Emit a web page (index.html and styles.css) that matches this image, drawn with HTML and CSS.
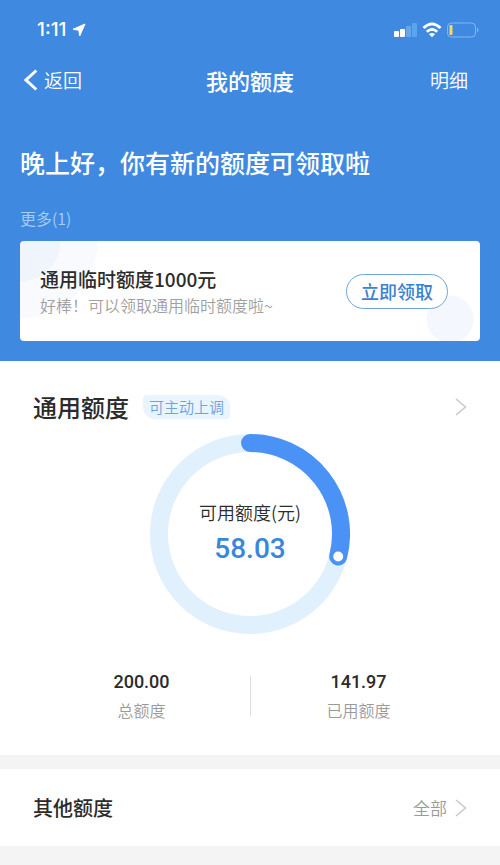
FILE: index.html
```html
<!DOCTYPE html>
<html lang="zh-CN">
<head>
<meta charset="utf-8">
<meta name="viewport" content="width=device-width, initial-scale=1">
<title>我的额度</title>
<link rel="stylesheet" href="styles.css">
</head>
<body>
<header class="hero">
  <div class="status">
    <div class="status-time">
      <span>1:11</span>
      <svg width="14" height="14" viewBox="0 0 14 14" aria-hidden="true"><path d="M13 1 L1 6.300 L6.800 7.200 L7.700 13 Z" fill="#fff" stroke="#fff" stroke-linejoin="round"/></svg>
    </div>
    <svg class="status-icons" width="86" height="16" viewBox="0 0 86 16" aria-hidden="true">
      <rect x="0" y="9" width="5" height="6" rx="1" fill="#fff"/>
      <rect x="6" y="7" width="5" height="8" rx="1" fill="#fff"/>
      <rect x="12" y="4" width="5" height="11" rx="1" fill="#66a7eb"/>
      <rect x="18" y="1" width="5" height="14" rx="1" fill="#5aa6ee"/>
      <g fill="none" stroke="#fff" stroke-width="2.7">
        <path d="M29.5 6 Q38 -2.2 46.5 6"/>
        <path d="M32.8 9.8 Q38 4.900 43.2 9.8"/>
      </g>
      <path d="M35 12.300 Q38 9.700 41 12.300 L38 15.200 Z" fill="#fff"/>
      <rect x="53.5" y="1" width="28" height="14" rx="4" fill="none" stroke="#83b8ee"/>
      <rect x="55.500" y="3" width="3" height="10" rx="1" fill="#fbd667"/>
      <path d="M83 5.500 Q86 8 83 10.500 Z" fill="#83b8ee"/>
    </svg>
  </div>
  <nav class="nav">
    <a class="back" href="#"><svg width="14" height="22" viewBox="0 0 14 22" aria-hidden="true"><path d="M12.300 1.500 L2 11 L12.300 20.500" fill="none" stroke="#fff" stroke-width="3"/></svg>返回</a>
    <h1>我的额度</h1>
    <a class="detail" href="#">明细</a>
  </nav>
  <h2 class="greeting">晚上好，你有新的额度可领取啦</h2>
  <a class="more" href="#">更多(1)</a>
  <section class="offer">
    <div>
      <h3>通用临时额度1000元</h3>
      <p>好棒！可以领取通用临时额度啦~</p>
    </div>
    <button type="button">立即领取</button>
  </section>
</header>
<main>
  <section class="quota">
    <div class="quota-head">
      <h2>通用额度</h2>
      <span class="tag">可主动上调</span>
      <a class="chevron" href="#" aria-label="通用额度"><svg width="12" height="18" viewBox="0 0 12 18" aria-hidden="true"><path d="M1 1 L10.500 9 L1 17" fill="none" stroke="#c8c8c8" stroke-width="1.500"/></svg></a>
    </div>
    <div class="ring">
      <svg viewBox="-100 -100 200 200" aria-hidden="true">
        <circle r="91" fill="none" stroke="#e1f0fd" stroke-width="18"/>
        <path d="M0 -91 A91 91 0 0 1 88.200 22.500" fill="none" stroke="#4a92f6" stroke-width="18" stroke-linecap="round"/>
        <circle cx="88.200" cy="22.500" r="5" fill="#fff"/>
      </svg>
      <div class="ring-text">
        <span>可用额度(元)</span>
        <strong>58.03</strong>
      </div>
    </div>
    <dl class="stats">
      <div><dt>总额度</dt><dd>200.00</dd></div>
      <div><dt>已用额度</dt><dd>141.97</dd></div>
    </dl>
  </section>
  <section class="other">
    <h2>其他额度</h2>
    <a href="#">全部<svg width="12" height="18" viewBox="0 0 12 18" aria-hidden="true"><path d="M1 1 L10.500 9 L1 17" fill="none" stroke="#c8c8c8" stroke-width="1.500"/></svg></a>
  </section>
</main>
</body>
</html>
```
FILE: styles.css
```css
* {
  box-sizing: border-box;
}

body,
h1,
h2,
h3,
p,
dl,
dd {
  margin: 0;
}

body {
  background: #f4f4f4;
  color: #2b2b2b;
  font-family: "Noto Sans CJK SC", sans-serif;
  font-size: 16px;
  font-weight: 350;
  line-height: 24px;
}

h1,
h2,
h3 {
  font-weight: 500;
}

a {
  color: inherit;
  text-decoration: none;
}

svg {
  display: block;
}

.hero {
  padding: 20px;
  background: #3f8ae0;
  color: #fff;
}

.status {
  display: flex;
  align-items: center;
  justify-content: space-between;
  height: 20px;
  padding-left: 17px;
}

.status-time {
  display: flex;
  align-items: center;
  gap: 6px;
  font-family: Inter, sans-serif;
  font-size: 19px;
  font-weight: 500;
}

.nav {
  display: grid;
  grid-template-columns: 1fr auto 1fr;
  align-items: center;
  height: 40px;
  margin-top: 20px;
  padding: 0 4px;
  font-size: 19px;
}

.nav h1 {
  font-size: 22px;
}

.back {
  display: flex;
  align-items: center;
  gap: 6px;
}

.detail {
  justify-self: end;
  padding-right: 8px;
}

.greeting {
  margin-top: 44px;
  font-size: 25px;
  line-height: 36px;
}

.more {
  display: block;
  margin-top: 26px;
  color: #a9cef5;
}

.offer {
  display: flex;
  align-items: center;
  justify-content: space-between;
  min-height: 100px;
  margin-top: 11px;
  padding: 0 32px 0 20px;
  border-radius: 4px;
  background:
    radial-gradient(circle at 0 0, #eff4fd 40px, transparent 41px),
    radial-gradient(circle at 0 0, #f8fafe 77px, transparent 78px),
    radial-gradient(circle at calc(100% - 30px) 78px, #f4f7fd 23px, transparent 24px),
    #fff;
}

.offer h3 {
  color: #2b2b2b;
  font-size: 19px;
  line-height: 28px;
}

.offer p {
  color: #a0a0a0;
}

.offer button {
  height: 35px;
  padding: 0 14px;
  border: 1px solid #6fa6dc;
  border-radius: 18px;
  background: #fff;
  color: #3b82cf;
  font-family: inherit;
  font-size: 18px;
  font-weight: 500;
  line-height: 24px;
}

.quota {
  padding: 28px 33px 33px;
  background: #fff;
}

.quota-head {
  display: flex;
  align-items: center;
  height: 36px;
}

.quota-head h2 {
  font-size: 24px;
}

.tag {
  margin-left: 14px;
  padding: 0 6px;
  border-radius: 4px 12px 4px 12px;
  background: #e9f5fe;
  color: #6fa3dc;
  font-size: 15px;
}

.chevron {
  margin-left: auto;
}

.ring {
  display: grid;
  width: 200px;
  margin: 9px auto 0;
}

.ring > * {
  grid-area: 1 / 1;
}

.ring-text {
  display: flex;
  flex-direction: column;
  align-items: center;
  padding-top: 66px;
  font-size: 18px;
}

.ring-text strong {
  margin-top: 7px;
  color: #3b86da;
  font-family: Roboto, sans-serif;
  font-size: 28px;
  font-weight: 500;
  line-height: 36px;
}

.stats {
  display: grid;
  grid-template-columns: 1fr 1fr;
  margin-top: 36px;
  text-align: center;
}

.stats > div {
  display: flex;
  flex-direction: column-reverse;
  gap: 4px;
}

.stats > div + div {
  background: linear-gradient(#dedede, #dedede) left center / 1px 40px no-repeat;
}

.stats dt {
  color: #9a9a9a;
}

.stats dd {
  font-family: Roboto, sans-serif;
  font-size: 18px;
  font-weight: 500;
}

.other {
  display: flex;
  align-items: center;
  justify-content: space-between;
  min-height: 77px;
  margin-top: 14px;
  padding: 0 33px;
  background: #fff;
}

.other h2 {
  font-size: 20px;
}

.other a {
  display: flex;
  align-items: center;
  gap: 8px;
  color: #9a9a9a;
  font-size: 17px;
}
```
